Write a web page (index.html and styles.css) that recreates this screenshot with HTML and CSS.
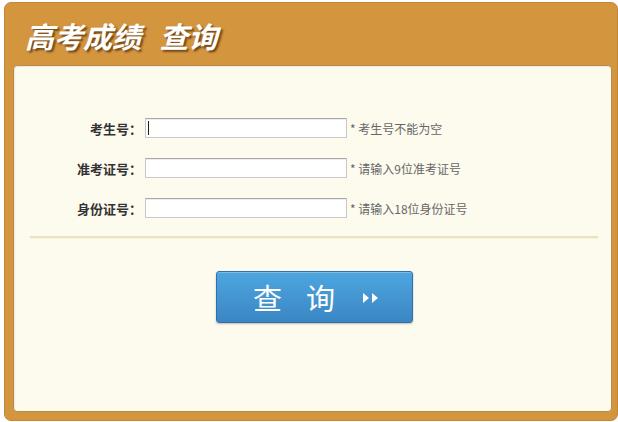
FILE: index.html
```html
<!DOCTYPE html>
<html lang="zh-CN">
<head>
<meta charset="utf-8">
<title>高考成绩 查询</title>
<link rel="stylesheet" href="styles.css">
</head>
<body>
<div class="frame">
  <div class="header"><h1 class="title">高考成绩 查询</h1></div>
  <div class="panel">
    <form class="form">
      <div class="row">
        <label class="label">考生号：</label>
        <span class="field"><input class="input" type="text"><span class="caret"></span></span>
        <span class="hint">* 考生号不能为空</span>
      </div>
      <div class="row">
        <label class="label">准考证号：</label>
        <span class="field"><input class="input" type="text"></span>
        <span class="hint">* 请输入9位准考证号</span>
      </div>
      <div class="row">
        <label class="label">身份证号：</label>
        <span class="field"><input class="input" type="text"></span>
        <span class="hint">* 请输入18位身份证号</span>
      </div>
    </form>
    <div class="divider"></div>
    <div class="actions">
      <button class="btn" type="button">
        <span class="btn-char">查</span><span class="btn-char">询</span>
        <svg class="btn-arrow" width="20" height="12" viewBox="0 0 20 12"><path d="M2 1 L8 6 L2 11 Z M11 1 L17 6 L11 11 Z" fill="#fff"/></svg>
      </button>
    </div>
  </div>
</div>
</body>
</html>
```
FILE: styles.css
```css
html, body {
  margin: 0;
  padding: 0;
  background: #ffffff;
}
body {
  font-family: "Noto Sans CJK SC", "Noto Sans", sans-serif;
}
.frame {
  box-sizing: border-box;
  margin: 2px 0 0 4px;
  width: 614px;
  height: 419px;
  background: #d4953f;
  border: 1px solid #c2853a;
  border-radius: 7px;
  padding: 0 5px 8px 8px;
  display: flex;
  flex-direction: column;
}
.header {
  height: 62px;
  display: flex;
  align-items: center;
  padding-left: 12px;
}
.title {
  margin: 0;
  font-size: 29px;
  font-weight: 700;
  font-style: italic;
  color: #ffffff;
  line-height: 1;
  word-spacing: 12px;
  text-shadow: 2px 2px 2px rgba(60, 30, 0, 0.65);
  position: relative;
  top: 1px;
}
.panel {
  flex: 1;
  background: #fdfaee;
  border: 1px solid #b98a4a;
  border-radius: 4px;
  box-shadow: inset 1px 1px 1px rgba(0,0,0,0.08);
  padding-top: 52px;
  display: flex;
  flex-direction: column;
}
.form {
  display: flex;
  flex-direction: column;
  gap: 20px;
}
.row {
  display: flex;
  align-items: center;
  height: 20px;
}
.label {
  width: 131px;
  text-align: right;
  font-size: 13px;
  font-weight: 700;
  color: #333333;
  padding-right: 3px;
  box-sizing: border-box;
  font-family: "Noto Sans CJK SC", sans-serif;
}
.field {
  position: relative;
  display: block;
}
.input {
  box-sizing: border-box;
  display: block;
  width: 202px;
  height: 20px;
  margin: 0;
  padding: 0 3px;
  border: 1px solid #c9c9c9;
  border-top-color: #a8a8a8;
  background: #ffffff;
  box-shadow: inset 0 1px 1px rgba(0,0,0,0.08);
  outline: none;
}
.caret {
  position: absolute;
  left: 3px;
  top: 3px;
  width: 1px;
  height: 14px;
  background: #222;
}
.hint {
  margin-left: 3px;
  font-size: 12px;
  color: #666666;
}
.divider {
  margin: 18px 13px 0 16px;
  height: 2px;
  background: #e8e2c0;
  border-bottom: 1px solid #f7f3e0;
}
.actions {
  display: flex;
  justify-content: center;
  padding-left: 4px;
  margin-top: 32px;
}
.btn {
  box-sizing: border-box;
  width: 197px;
  height: 52px;
  border: 1px solid #2f72ab;
  border-radius: 3px;
  background: linear-gradient(#4ea6df, #3a86c4);
  box-shadow: 0 1px 2px rgba(0,0,0,0.25), inset 0 1px 0 rgba(255,255,255,0.25);
  color: #ffffff;
  display: flex;
  align-items: center;
  padding: 0 0 0 36px;
  font-family: "Noto Sans CJK SC", sans-serif;
  cursor: pointer;
}
.btn-char {
  font-size: 29px;
  line-height: 1;
  margin-right: 24px;
}
.btn-arrow {
  margin-left: 2px;
  margin-top: 1px;
}
```
